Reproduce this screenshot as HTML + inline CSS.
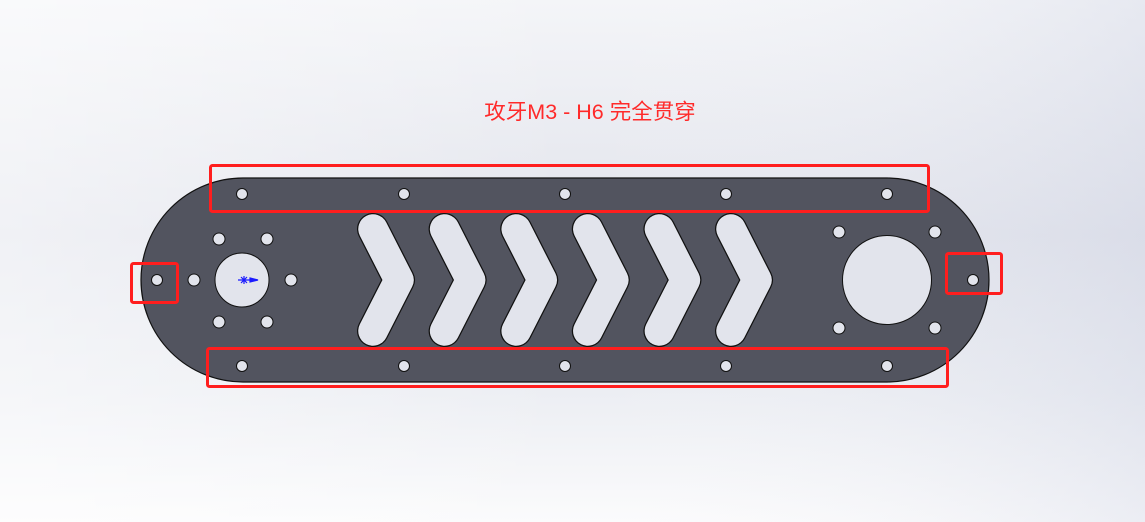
<!DOCTYPE html>
<html><head><meta charset="utf-8"><style>
html,body{margin:0;padding:0}
body{width:1145px;height:522px;overflow:hidden;background:#eceef3;}
svg{position:absolute;left:0;top:0}
text{font-family:"Liberation Sans","Noto Sans CJK SC",sans-serif}
</style></head><body>
<svg width="1145" height="522" viewBox="0 0 1145 522">
<defs>
<linearGradient id="bg" x1="0" y1="0" x2="0" y2="1">
<stop offset="0" stop-color="#f4f5f8"/><stop offset="0.45" stop-color="#e2e4ec"/><stop offset="0.75" stop-color="#eceef3"/><stop offset="1" stop-color="#fbfbfc"/>
</linearGradient>
<linearGradient id="bg2" x1="0" y1="0" x2="1" y2="0">
<stop offset="0" stop-color="#ffffff" stop-opacity="0.5"/><stop offset="0.5" stop-color="#ffffff" stop-opacity="0"/><stop offset="1" stop-color="#c8cde0" stop-opacity="0.3"/>
</linearGradient>
</defs>
<rect width="1145" height="522" fill="url(#bg)"/>
<rect width="1145" height="522" fill="url(#bg2)"/>
<text x="590" y="119" font-size="21.5" fill="#ff2a2a" text-anchor="middle">攻牙M3 - H6 完全贯穿</text>
<path d="M243,178 L887,178 A102,102 0 0 1 887,382 L243,382 A102,102 0 0 1 243,178 Z" fill="#52545f" stroke="#111" stroke-width="1.2"/>
<g fill="#e2e4ec" stroke="#111" stroke-width="1">
<circle cx="242" cy="194" r="5.5"/><circle cx="404" cy="194" r="5.5"/><circle cx="565" cy="194" r="5.5"/><circle cx="726" cy="194" r="5.5"/><circle cx="887" cy="194" r="5.5"/>
<circle cx="242" cy="366" r="5.5"/><circle cx="404" cy="366" r="5.5"/><circle cx="565" cy="366" r="5.5"/><circle cx="726" cy="366" r="5.5"/><circle cx="887" cy="366" r="5.5"/>
<circle cx="242" cy="280" r="27"/>
<circle cx="219" cy="239" r="6"/><circle cx="267" cy="239" r="6"/><circle cx="194" cy="280" r="6"/><circle cx="291" cy="280" r="6"/><circle cx="219" cy="322" r="6"/><circle cx="267" cy="322" r="6"/>
<circle cx="157" cy="280" r="5.5"/>
<circle cx="887" cy="280" r="44.5"/>
<circle cx="839" cy="232" r="6"/><circle cx="935" cy="232" r="6"/><circle cx="839" cy="328" r="6"/><circle cx="935" cy="328" r="6"/>
<circle cx="973" cy="280" r="5.5"/>
</g>
<g fill="none" stroke-linecap="round" stroke-linejoin="round">
<g id="ch">
<path d="M373,229 L399,280 L373,331" stroke="#111" stroke-width="32"/>
<path d="M373,229 L399,280 L373,331" stroke="#e2e4ec" stroke-width="29.5"/>
</g>
<use href="#ch" x="71.6"/><use href="#ch" x="143.2"/><use href="#ch" x="214.8"/><use href="#ch" x="286.4"/><use href="#ch" x="358"/>
</g>
<g stroke="#1a1aff" stroke-width="1.2" fill="#1a1aff">
<path d="M238,280 L254,280 M241,277 L247,283 M247,277 L241,283 M244,276 L244,284"/>
<path d="M250,278 L258,280 L250,282 Z"/>
</g>
<g fill="none" stroke="#ff1e1e" stroke-width="3">
<rect x="210.5" y="165.5" width="718" height="46" rx="2"/>
<rect x="207.5" y="348.5" width="740" height="38" rx="2"/>
<rect x="131.5" y="263.5" width="46" height="39" rx="2"/>
<rect x="946.5" y="253.5" width="55" height="40" rx="2"/>
</g>
</svg>
</body></html>
